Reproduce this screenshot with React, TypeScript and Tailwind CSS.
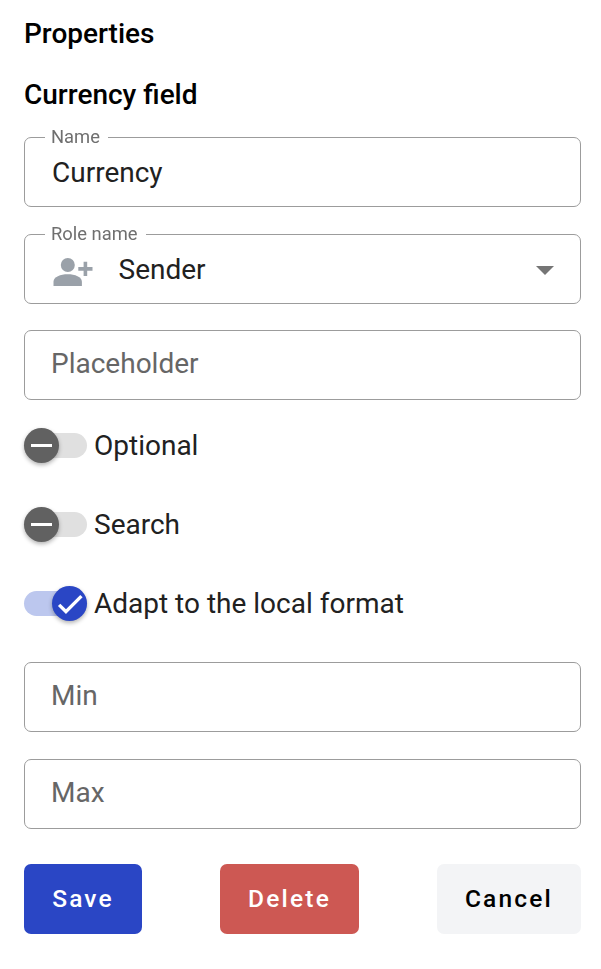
import type { ReactNode } from "react";

function Field({ label, children }: { label?: string; children: ReactNode }) {
  return (
    <div className="relative flex h-[70px] items-center rounded-[7px] border border-[#9c9c9c] px-[27px]">
      {label && (
        <span className="absolute -top-[12.5px] left-[20px] whitespace-nowrap bg-white pr-[8px] pl-[6px] text-[18.375px] leading-[22px] text-[#6f6f6f] will-change-transform">
          {label}
        </span>
      )}
      {children}
    </div>
  );
}

function Hint({ children }: { children: ReactNode }) {
  return <span className="-mt-[3px] -ml-[1px] text-[#666]">{children}</span>;
}

function Toggle({ label, on = false }: { label: string; on?: boolean }) {
  return (
    <label className="flex h-[35px] items-center">
      <span
        className={
          on
            ? "flex h-[25px] w-[63px] items-center justify-end rounded-full bg-[#bcc7ee]"
            : "flex h-[25px] w-[63px] items-center rounded-full bg-[#e0e0e0]"
        }
      >
        <span
          className={
            on
              ? "flex size-[35px] items-center justify-center rounded-full bg-[#2a46c5] shadow-[0_2px_4px_rgba(0,0,0,0.3)]"
              : "flex size-[35px] items-center justify-center rounded-full bg-[#616161] shadow-[0_2px_4px_rgba(0,0,0,0.3)]"
          }
        >
          {on ? (
            <svg viewBox="0 0 24 24" className="h-[32px] w-[32px]" fill="#fff">
              <path d="M19.69 5.23L8.96 15.96l-4.23-4.23L2.96 13.5l6 6L21.46 7z" />
            </svg>
          ) : (
            <span className="-mt-[1px] h-[3px] w-[21px] bg-white" />
          )}
        </span>
      </span>
      <span className="ml-[7px]">{label}</span>
    </label>
  );
}

const button =
  "h-[70px] rounded-[7px] px-[27px] pb-[2px] text-[24.5px] font-medium tracking-[2.19px]";

export default function App() {
  return (
    <main className="h-[969px] w-[601px] bg-white pt-[16px] pr-[20px] pl-[24px] font-['Roboto',sans-serif] text-[28px] leading-[35px] text-[#212121]">
      <h1 className="font-medium text-black">Properties</h1>
      <h2 className="mt-[26px] font-medium text-black">Currency field</h2>

      <div className="mt-[25px] flex flex-col gap-[27px]">
        <Field label="Name">
          <span>Currency</span>
        </Field>
        <Field label="Role name">
          <svg viewBox="0 0 40 29" className="mt-[5px] ml-[1px] h-[29px] w-[40px]" fill="#9aa1a9">
            <circle cx="14.8" cy="8" r="7" />
            <path d="M.5 29v-4.200c0-5 7-7.600 14.200-7.600s14.200 2.600 14.200 7.600V29z" />
            <path d="M30.600 4.800h3.600v5.300h5.300v3.600h-5.300V19h-3.600v-5.300h-5.300v-3.600h5.300z" />
          </svg>
          <span className="ml-[25.5px] flex-1">Sender</span>
          <svg viewBox="0 0 18 9" className="mt-[2px] mr-[-1px] h-[9px] w-[18px]" fill="#757575">
            <path d="M0 0h18L9 9z" />
          </svg>
        </Field>
      </div>
      <div className="mt-[26px]">
        <Field>
          <Hint>Placeholder</Hint>
        </Field>
      </div>

      <div className="mt-[28px] flex flex-col gap-[44px]">
        <Toggle label="Optional" />
        <Toggle label="Search" />
        <Toggle label="Adapt to the local format" on />
      </div>

      <div className="mt-[41px] flex flex-col gap-[27px]">
        <Field>
          <Hint>Min</Hint>
        </Field>
        <Field>
          <Hint>Max</Hint>
        </Field>
      </div>

      <div className="mt-[35px] flex justify-between">
        <button className={`${button} w-[118px] bg-[#2a46c5] text-white`}>Save</button>
        <button className={`${button} w-[139px] bg-[#cd5853] text-white`}>Delete</button>
        <button className={`${button} w-[144px] bg-[#f3f4f6] text-black`}>Cancel</button>
      </div>
    </main>
  );
}
